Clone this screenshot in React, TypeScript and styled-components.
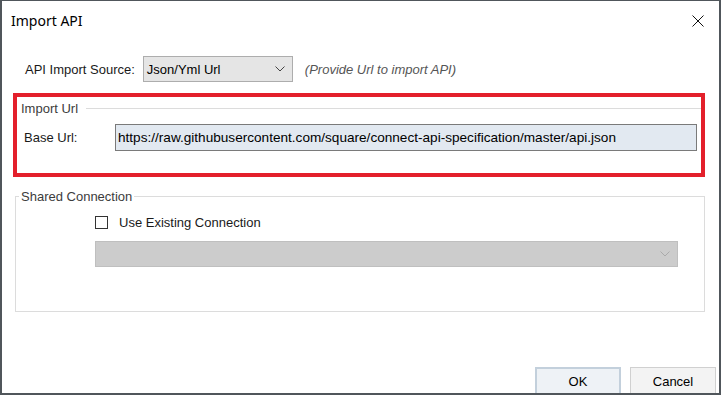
import React from 'react'
import styled, { createGlobalStyle } from 'styled-components'

const GlobalStyle = createGlobalStyle`
  html, body {
    margin: 0;
    padding: 0;
    background: #fff;
  }
  body {
    font-family: 'Liberation Sans', Arial, sans-serif;
    font-size: 13px;
    color: #1a1a1a;
  }
`

const Window = styled.div`
  box-sizing: border-box;
  width: 721px;
  height: 395px;
  border: 2px solid #50565b;
  border-top-width: 1px;
  background: #fff;
  display: flex;
  flex-direction: column;
  overflow: hidden;

  & > * {
    flex-shrink: 0;
  }
`

const TitleBar = styled.div`
  height: 39px;
  display: flex;
  align-items: center;
  justify-content: space-between;
  padding: 0 15px 0 9px;
`

const Title = styled.span`
  font-family: 'Segoe UI', 'Noto Sans', sans-serif;
  font-size: 14px;
  color: #000;
`

const CloseButton = styled.button`
  border: 0;
  background: none;
  padding: 0;
  width: 12px;
  height: 12px;
  display: flex;
  cursor: default;
`

const SourceRow = styled.div`
  display: flex;
  align-items: center;
  margin-top: 16px;
  padding-left: 23px;
  height: 26px;
`

const Label = styled.span<{ $width?: number }>`
  flex-shrink: 0;
  width: ${(p) => (p.$width ? `${p.$width}px` : 'auto')};
  white-space: nowrap;
`

const Select = styled.div<{ $disabled?: boolean }>`
  box-sizing: border-box;
  display: flex;
  align-items: center;
  justify-content: space-between;
  height: 26px;
  padding: 0 7px 0 3px;
  border: 1px solid ${(p) => (p.$disabled ? '#bfbfbf' : '#adadad')};
  background: ${(p) => (p.$disabled ? '#cccccc' : '#e5e5e5')};
  color: #000;
`

const SourceSelect = styled(Select)`
  width: 150px;
  margin-left: 8px;
`

const Hint = styled.span`
  margin-left: 12px;
  font-style: italic;
  color: #555;
`

const Highlight = styled.div`
  box-sizing: border-box;
  height: 84px;
  margin: 11px 14px 0 11px;
  border: 4px solid #e3202b;
`

const GroupHeader = styled.div`
  display: flex;
  align-items: center;
  height: 22px;
  padding-left: 4px;
  color: #3c3c3c;

  &::after {
    content: '';
    flex: 1;
    height: 1px;
    margin-left: 8px;
    background: #dcdcdc;
  }
`

const FieldRow = styled.div`
  display: flex;
  align-items: center;
  margin-top: 5px;
  padding: 0 4px 0 7px;
`

const TextBox = styled.div`
  box-sizing: border-box;
  flex: 1;
  height: 27px;
  display: flex;
  align-items: center;
  padding-left: 2px;
  border: 1px solid #7a7a7a;
  background: #e2e9f1;
  color: #000;
  font-size: 13.6px;
  white-space: nowrap;
  overflow: hidden;
`

const GroupBox = styled.fieldset`
  margin: 12px 14px 0 13px;
  padding: 0;
  border: 1px solid #dcdcdc;
  min-width: 0;
`

const GroupLegend = styled.legend`
  margin-left: 3px;
  padding: 0 2px;
  line-height: 15px;
  color: #3c3c3c;
`

const GroupBody = styled.div`
  padding: 0 0 44px 79px;
`

const CheckRow = styled.label`
  display: flex;
  align-items: center;
  height: 15px;
  margin-top: 11px;
`

const CheckBox = styled.span`
  box-sizing: border-box;
  width: 13px;
  height: 13px;
  border: 1px solid #333;
  background: #fff;
  margin-right: 11px;
`

const ConnectionSelect = styled(Select)`
  width: 583px;
  margin-top: 11px;
`

const Footer = styled.div`
  display: flex;
  justify-content: flex-end;
  gap: 9px;
  margin-top: 55px;
  padding-right: 3px;
`

const Button = styled.button<{ $default?: boolean }>`
  box-sizing: border-box;
  width: 86px;
  height: 32px;
  flex-shrink: 0;
  padding: 0 0 4px;
  font-family: 'Liberation Sans', Arial, sans-serif;
  font-size: 13px;
  color: #000;
  border: ${(p) => (p.$default ? '2px solid #c3d0dc' : '1px solid #d0d0d0')};
  background: ${(p) => (p.$default ? '#eef2f6' : '#f3f3f3')};
`

const Chevron = ({ color }: { color: string }) => (
  <svg width="10" height="6" viewBox="0 0 10 6">
    <path d="M0.5 0.5 L5 5 L9.5 0.5" fill="none" stroke={color} strokeWidth="1" />
  </svg>
)

const App: React.FC = () => (
  <>
    <GlobalStyle />
    <Window>
      <TitleBar>
        <Title>Import API</Title>
        <CloseButton aria-label="Close">
          <svg width="12" height="12" viewBox="0 0 12 12">
            <path d="M0.5 0.5 L11.5 11.5 M11.5 0.5 L0.5 11.5" stroke="#111" strokeWidth="1" />
          </svg>
        </CloseButton>
      </TitleBar>

      <SourceRow>
        <Label>API Import Source:</Label>
        <SourceSelect>
          <span>Json/Yml Url</span>
          <Chevron color="#444" />
        </SourceSelect>
        <Hint>(Provide Url to import API)</Hint>
      </SourceRow>

      <Highlight>
        <GroupHeader>Import Url</GroupHeader>
        <FieldRow>
          <Label $width={91}>Base Url:</Label>
          <TextBox>https://raw.githubusercontent.com/square/connect-api-specification/master/api.json</TextBox>
        </FieldRow>
      </Highlight>

      <GroupBox>
        <GroupLegend>Shared Connection</GroupLegend>
        <GroupBody>
          <CheckRow>
            <CheckBox />
            Use Existing Connection
          </CheckRow>
          <ConnectionSelect $disabled>
            <span />
            <Chevron color="#aaa" />
          </ConnectionSelect>
        </GroupBody>
      </GroupBox>

      <Footer>
        <Button $default>OK</Button>
        <Button>Cancel</Button>
      </Footer>
    </Window>
  </>
)

export default App
